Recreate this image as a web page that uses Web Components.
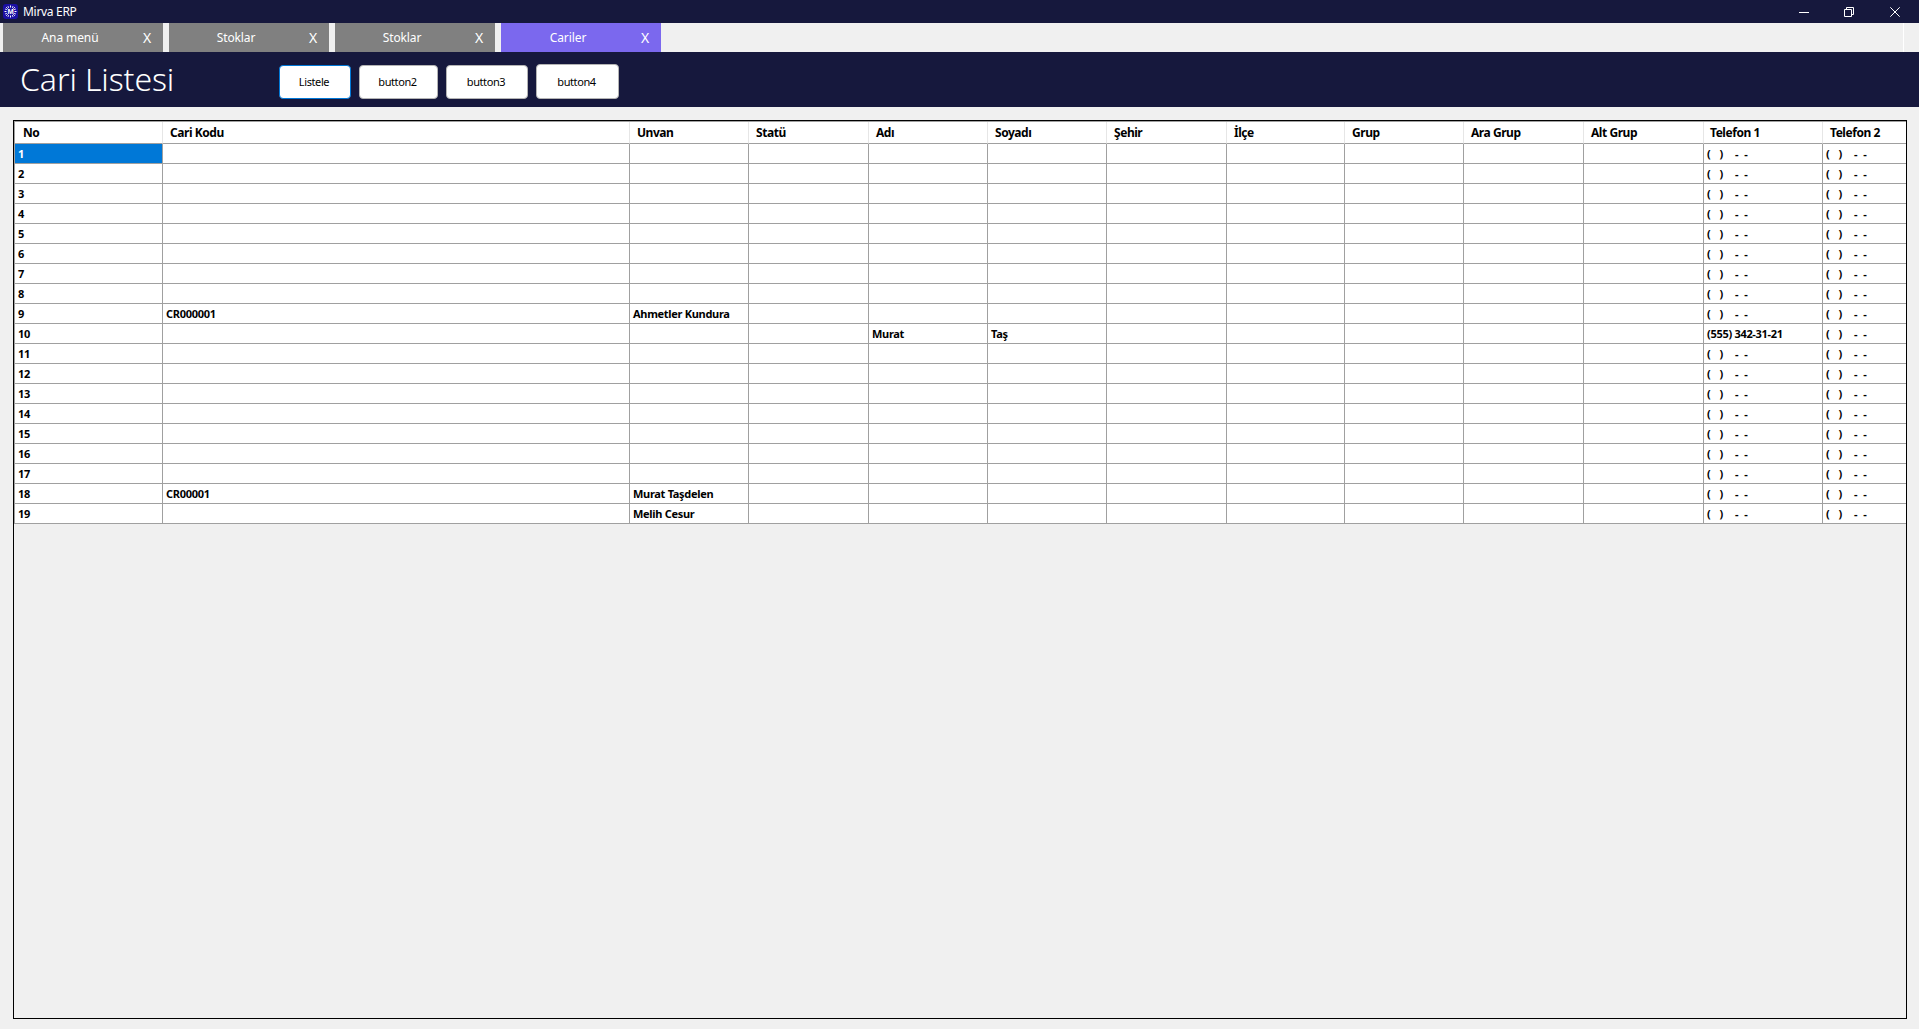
<!DOCTYPE html>
<html lang="tr">
<head>
<meta charset="utf-8">
<title>Mirva ERP</title>
<style>
    html, body { margin: 0; height: 100%; overflow: hidden; background: #f0f0f0; }
    body { font-family: "Noto Sans", "Liberation Sans", sans-serif; }
</style>
</head>
<body>
<erp-window>
    <erp-title-bar slot="title" caption="Mirva ERP"></erp-title-bar>
    <erp-tab-strip slot="tabs">
        <erp-tab label="Ana menü"></erp-tab>
        <erp-tab label="Stoklar"></erp-tab>
        <erp-tab label="Stoklar"></erp-tab>
        <erp-tab label="Cariler" active></erp-tab>
    </erp-tab-strip>
    <erp-page-header slot="header" heading="Cari Listesi">
        <erp-button focused style="width:72px">Listele</erp-button>
        <erp-button style="width:79px">button2</erp-button>
        <erp-button style="width:82px">button3</erp-button>
        <erp-button style="width:83px;height:35px;margin-top:-1px">button4</erp-button>
    </erp-page-header>
    <erp-data-grid slot="content"></erp-data-grid>
</erp-window>

<script>
// Window frame
class ErpWindow extends HTMLElement {
    constructor() {
        super();
        this.attachShadow({ mode: 'open' });
        this.shadowRoot.innerHTML = `
            <style>
                :host { display: flex; flex-direction: column; height: 100vh; background: #f0f0f0; }
                .content { flex: 1; min-height: 0; display: flex; padding: 13px 12px 10px 13px; }
                ::slotted([slot="content"]) { flex: 1; }
            </style>
            <slot name="title"></slot>
            <slot name="tabs"></slot>
            <slot name="header"></slot>
            <div class="content"><slot name="content"></slot></div>
        `;
    }
}

class ErpTitleBar extends HTMLElement {
    constructor() {
        super();
        this.attachShadow({ mode: 'open' });
    }

    connectedCallback() {
        this.shadowRoot.innerHTML = `
            <style>
                :host {
                    display: flex; align-items: center; height: 23px; flex: none;
                    background: #16183d; color: #fff;
                    font: 12px "Noto Sans", "Liberation Sans", sans-serif;
                }
                .logo { margin: 0 5px 0 3px; display: block; }
                .caption { flex: 1; position: relative; top: -0.5px; letter-spacing: -0.3px; }
                .ctl { display: block; flex: none; }
                .min { margin-right: 35px; }
                .max { margin-right: 36px; }
                .close { margin-right: 19px; }
            </style>
            <svg class="logo" width="15" height="15" viewBox="0 0 15 15">
                <rect width="15" height="15" rx="3" fill="#1b10a5"/>
                <path d="M7.5 1.5v2M7.5 11.5v2M1.5 7.5h2M11.5 7.5h2M3.2 3.2l1.5 1.5M10.3 10.3l1.5 1.5M3.2 11.8l1.5-1.5M10.3 4.7l1.5-1.5M5 2.2l.6 1.6M9.4 11.2l.6 1.6M2.2 10l1.6-.6M11.2 5.6l1.6-.6M10 2.2l-.6 1.6M5.6 11.2L5 12.8M2.2 5l1.6.6M11.2 9.4l1.6.6" stroke="#fff" stroke-width="1" fill="none"/>
                <text x="7.5" y="10" font-size="7.5" font-weight="700" text-anchor="middle" fill="#fff" font-family="Liberation Sans, sans-serif">M</text>
            </svg>
            <span class="caption">${this.getAttribute('caption') || ''}</span>
            <svg class="ctl min" width="10" height="10" viewBox="0 0 10 10"><path d="M0 5.5h10" stroke="#fff" fill="none"/></svg>
            <svg class="ctl max" width="10" height="10" viewBox="0 0 10 10"><path d="M.5 2.5h7v7h-7zM2.5 2.5v-2h7v7h-2" stroke="#fff" fill="none"/></svg>
            <svg class="ctl close" width="10" height="10" viewBox="0 0 10 10"><path d="M.3.3l9.4 9.4M9.7.3L.3 9.7" stroke="#fff" fill="none"/></svg>
        `;
    }
}

class ErpTabStrip extends HTMLElement {
    constructor() {
        super();
        this.attachShadow({ mode: 'open' });
        this.shadowRoot.innerHTML = `
            <style>
                :host {
                    display: flex; gap: 6px; height: 29px; flex: none;
                    padding-left: 3px; box-sizing: border-box;
                    background: #f0f0f0; position: relative;
                }
                .edge { position: absolute; top: 0; bottom: 0; left: 1903px; width: 1px; background: #fff; }
            </style>
            <slot></slot>
            <div class="edge"></div>
        `;
    }
}

class ErpTab extends HTMLElement {
    constructor() {
        super();
        this.attachShadow({ mode: 'open' });
    }

    connectedCallback() {
        this.shadowRoot.innerHTML = `
            <style>
                :host {
                    display: flex; align-items: center; width: 160px; height: 29px;
                    background: #808080; color: #fff;
                    font: 12px "Noto Sans", "Liberation Sans", sans-serif;
                }
                :host([active]) { background: #7b68ee; }
                .label { width: 134px; text-align: center; letter-spacing: -0.1px; }
                .close { margin-left: 6px; font-size: 14px; line-height: 1; }
            </style>
            <span class="label">${this.getAttribute('label') || ''}</span>
            <span class="close">X</span>
        `;
    }
}

class ErpPageHeader extends HTMLElement {
    constructor() {
        super();
        this.attachShadow({ mode: 'open' });
    }

    connectedCallback() {
        this.shadowRoot.innerHTML = `
            <style>
                :host {
                    display: flex; align-items: flex-start; height: 55px; flex: none;
                    background: #16183d; box-sizing: border-box; padding: 13px 0 0 20px;
                }
                h1 {
                    width: 259px; margin: -9px 0 0; flex: none; letter-spacing: -0.1px;
                    font: 300 32px/46px "Noto Sans", "Open Sans", sans-serif; color: #fff;
                }
                .buttons { display: flex; gap: 8px; }
            </style>
            <h1>${this.getAttribute('heading') || ''}</h1>
            <div class="buttons"><slot></slot></div>
        `;
    }
}

class ErpButton extends HTMLElement {
    constructor() {
        super();
        this.attachShadow({ mode: 'open' });
        this.shadowRoot.innerHTML = `
            <style>
                :host {
                    display: flex; align-items: center; justify-content: center;
                    height: 34px; box-sizing: border-box; padding: 0 2px 1px 0;
                    background: #fff; color: #000;
                    border: 1px solid #b4b4b4; border-radius: 4px;
                    font: 11px "Noto Sans", "Liberation Sans", sans-serif; letter-spacing: -0.4px;
                }
                :host([focused]) { border: 1.5px solid #0078d7; }
            </style>
            <slot></slot>
        `;
    }
}

// Cari listesi tablosu
const COLUMNS = [
    ['No', 148], ['Cari Kodu', 467], ['Unvan', 119], ['Statü', 120], ['Adı', 119], ['Soyadı', 119],
    ['Şehir', 120], ['İlçe', 118], ['Grup', 119], ['Ara Grup', 120], ['Alt Grup', 120],
    ['Telefon 1', 119], ['Telefon 2', 83]
];
const EMPTY_PHONE = '<span class="mask">(   )    -  -</span>';
const ROWS = {
    9: { 1: 'CR000001', 2: 'Ahmetler Kundura' },
    10: { 4: 'Murat', 5: 'Taş', 11: '(555) 342-31-21' },
    18: { 1: 'CR00001', 2: 'Murat Taşdelen' },
    19: { 2: 'Melih Cesur' }
};

class ErpDataGrid extends HTMLElement {
    constructor() {
        super();
        this.attachShadow({ mode: 'open' });
    }

    connectedCallback() {
        this.render();
    }

    render() {
        const cols = COLUMNS.map(c => `<col style="width:${c[1]}px">`).join('');
        const head = COLUMNS.map(c => `<th>${c[0]}</th>`).join('');
        let rows = '';
        for (let n = 1; n <= 19; n++) {
            const data = ROWS[n] || {};
            let cells = `<td${n === 1 ? ' class="selected"' : ''}>${n}</td>`;
            for (let i = 1; i < COLUMNS.length; i++) {
                const text = data[i] || (i >= 11 ? EMPTY_PHONE : '');
                cells += `<td>${text}</td>`;
            }
            rows += `<tr>${cells}</tr>`;
        }
        this.shadowRoot.innerHTML = `
            <style>
                :host {
                    display: block; box-sizing: border-box;
                    border: 1px solid #000; background: #f0f0f0; overflow: hidden;
                }
                table {
                    border-collapse: separate; border-spacing: 0; table-layout: fixed; width: 1892px;
                    border-left: 1px solid #a0a0a0; border-top: 1px solid #a0a0a0;
                    background: #fff; color: #000;
                    font: 700 11px "Noto Sans", "Liberation Sans", sans-serif; letter-spacing: -0.3px;
                }
                th, td {
                    box-sizing: border-box; padding: 0; overflow: hidden; white-space: pre;
                    text-align: left; border-right: 1px solid #a0a0a0; border-bottom: 1px solid #a0a0a0;
                }
                th {
                    height: 22px; padding-left: 7px;
                    border-right-color: #e6e6e6; font-size: 12px; letter-spacing: -0.45px;
                }
                th:first-child { padding-left: 8px; }
                th:nth-child(12) { padding-left: 6px; }
                td { height: 20px; padding: 0 0 0 3px; }
                th:last-child, td:last-child { border-right: 0; }
                .selected { background: #0078d7; color: #fff; }
                .mask { word-spacing: 0.45px; }
            </style>
            <table>
                <colgroup>${cols}</colgroup>
                <thead><tr>${head}</tr></thead>
                <tbody>${rows}</tbody>
            </table>
        `;
    }
}

customElements.define('erp-window', ErpWindow);
customElements.define('erp-title-bar', ErpTitleBar);
customElements.define('erp-tab-strip', ErpTabStrip);
customElements.define('erp-tab', ErpTab);
customElements.define('erp-page-header', ErpPageHeader);
customElements.define('erp-button', ErpButton);
customElements.define('erp-data-grid', ErpDataGrid);
</script>
</body>
</html>
